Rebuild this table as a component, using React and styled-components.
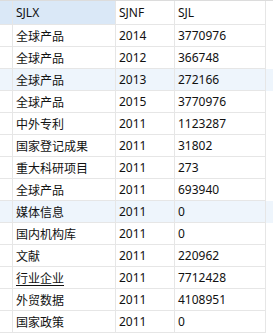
import React from "react"
import styled, { createGlobalStyle } from "styled-components"

const GlobalStyle = createGlobalStyle`
  html, body {
    margin: 0;
    padding: 0;
    background: #ffffff;
  }
  body {
    font-family: "Noto Sans", "Noto Sans CJK SC", sans-serif;
    font-size: 12px;
    color: #111;
  }
`

const Grid = styled.div`
  width: 273px;
  height: 333px;
  overflow: hidden;
  background: #fff;
  border-top: 1px solid #dcdcdc;
  box-sizing: border-box;
`

const Row = styled.div`
  display: grid;
  grid-template-columns: 13px 103px 59px 91px;
  height: ${({ $header }) => ($header ? "24px" : "22px")};
  background: ${({ $alt }) => ($alt ? "#eef5fc" : "#fff")};
  box-sizing: border-box;
`

const Cell = styled.div`
  display: flex;
  align-items: center;
  padding-left: 3px;
  border-right: 1px solid #e6e6e6;
  border-bottom: 1px solid #e6e6e6;
  white-space: nowrap;
  overflow: hidden;
  background: ${({ $sel }) => ($sel ? "#dae8f7" : "transparent")};
  text-decoration: ${({ $link }) => ($link ? "underline" : "none")};
  text-underline-offset: 2px;
  box-sizing: border-box;
`

const Gutter = styled(Cell)`
  padding: 0;
`

const rows = [
  ["全球产品", "2014", "3770976"],
  ["全球产品", "2012", "366748"],
  ["全球产品", "2013", "272166", true],
  ["全球产品", "2015", "3770976"],
  ["中外专利", "2011", "1123287"],
  ["国家登记成果", "2011", "31802"],
  ["重大科研项目", "2011", "273"],
  ["全球产品", "2011", "693940"],
  ["媒体信息", "2011", "0", true],
  ["国内机构库", "2011", "0"],
  ["文献", "2011", "220962"],
  ["行业企业", "2011", "7712428", false, true],
  ["外贸数据", "2011", "4108951"],
  ["国家政策", "2011", "0"],
]

export default function App() {
  return (
    <>
      <GlobalStyle />
      <Grid>
        <Row $header>
          <Gutter $sel />
          <Cell $sel>SJLX</Cell>
          <Cell>SJNF</Cell>
          <Cell>SJL</Cell>
        </Row>
        {rows.map(([a, b, c, alt, link], i) => (
          <Row key={i} $alt={alt}>
            <Gutter />
            <Cell $link={link}>{a}</Cell>
            <Cell>{b}</Cell>
            <Cell>{c}</Cell>
          </Row>
        ))}
      </Grid>
    </>
  )
}
